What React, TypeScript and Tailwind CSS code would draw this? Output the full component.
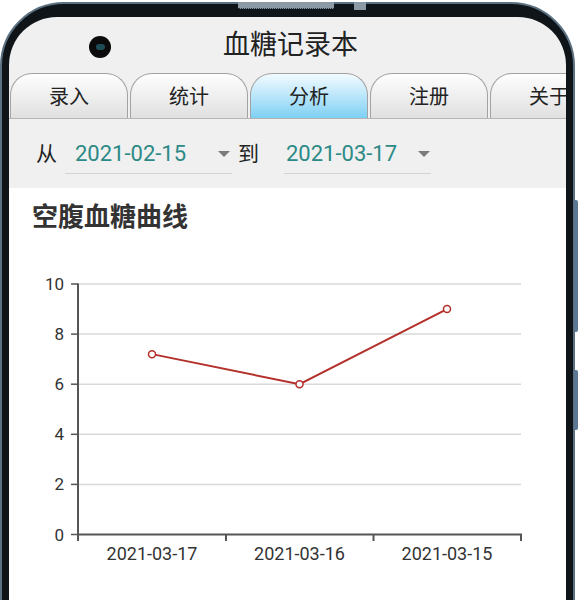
const font = { fontFamily: 'Roboto, "Noto Sans CJK SC", "Noto Sans", sans-serif' };

const tabs = ['录入', '统计', '分析', '注册', '关于'];

function Tab({ label, active }: { label: string; active: boolean }) {
  return (
    <div
      className={`w-[118px] h-[45px] mr-[2px] shrink-0 rounded-t-[22px] border border-b-0 border-[#a2a2a2] flex justify-center pt-[9px] text-[20px] leading-[28px] text-[#222] ${
        active ? 'bg-gradient-to-b from-[#f2fbff] to-[#7dd0f4]' : 'bg-gradient-to-b from-[#fefefe] to-[#e0e0e0]'
      }`}
    >
      {label}
    </div>
  );
}

function Caret() {
  return <div className="w-0 h-0 border-l-[6px] border-r-[6px] border-t-[6px] border-l-transparent border-r-transparent border-t-[#7b7b7b] mt-[12px]" />;
}

function Chart() {
  const grid = [10, 8, 6, 4, 2, 0];
  const y = (v: number) => 534.5 - v * 25.05;
  const pts = [
    { x: 152, v: 7.2 },
    { x: 299.5, v: 6 },
    { x: 447, v: 9 },
  ];
  return (
    <svg width="559" height="340" viewBox="9 250 559 340" className="block">
      {grid.slice(0, 5).map((g) => (
        <line key={g} x1="78" x2="521" y1={y(g)} y2={y(g)} stroke="#d9d9d9" strokeWidth="1.5" />
      ))}
      {grid.map((g) => (
        <g key={'t' + g}>
          <line x1="71" x2="78" y1={y(g)} y2={y(g)} stroke="#555" strokeWidth="1.5" />
          <text x="64" y={y(g)} textAnchor="end" dominantBaseline="central" fontSize="17" fill="#333" style={font}>
            {g}
          </text>
        </g>
      ))}
      <line x1="78" x2="78" y1="283.5" y2="541" stroke="#555" strokeWidth="2" />
      <line x1="77" x2="522" y1="534.5" y2="534.5" stroke="#555" strokeWidth="2" />
      {[226, 373.5, 521].map((x) => (
        <line key={x} x1={x} x2={x} y1="534" y2="541" stroke="#555" strokeWidth="2" />
      ))}
      {['2021-03-17', '2021-03-16', '2021-03-15'].map((d, i) => (
        <text key={d} x={pts[i].x} y="553" textAnchor="middle" dominantBaseline="central" fontSize="18" fill="#333" style={font}>
          {d}
        </text>
      ))}
      <polyline
        points={pts.map((p) => `${p.x},${y(p.v)}`).join(' ')}
        fill="none"
        stroke="#b3302b"
        strokeWidth="2"
      />
      {pts.map((p) => (
        <circle key={p.x} cx={p.x} cy={y(p.v)} r="3.5" fill="#fff" stroke="#b3302b" strokeWidth="1.5" />
      ))}
    </svg>
  );
}

export default function App() {
  return (
    <div className="w-[578px] h-[600px] bg-white overflow-hidden relative" style={font}>
      {/* phone frame */}
      <div className="mr-[3px] mt-[2px] h-[660px] rounded-t-[64px] bg-[#0e1418] border-2 border-[#5b7182] px-[7px] pt-[13px] relative">
        <div className="absolute left-[236px] top-[-2px] w-[96px] h-[7px] bg-[#8b9aa5] border-b border-dotted border-[#2a3640]" />
        <div className="absolute left-[352px] top-[-2px] w-[12px] h-[8px] bg-[#8b9aa5]" />

        <div className="h-full rounded-t-[48px] overflow-hidden bg-[#f0f0f0] flex flex-col">
          {/* title */}
          <div className="h-[56px] shrink-0 relative flex items-center justify-center text-[27px] text-[#222]">
            <div className="absolute left-[80px] top-[19px] w-[22px] h-[22px] rounded-full bg-[#0b0b0b] flex items-center justify-center">
              <div className="w-[9px] h-[6px] rounded-full bg-[#1f4d55]" />
            </div>
            <span className="pl-[6px]">血糖记录本</span>
          </div>

          {/* tabs */}
          <div className="h-[46px] shrink-0 flex items-end pl-[1px] border-b border-[#b5b5b5] overflow-hidden">
            {tabs.map((t, i) => (
              <Tab key={t} label={t} active={i === 2} />
            ))}
          </div>

          {/* date range */}
          <div className="h-[69px] shrink-0 flex items-start pt-[20px] pl-[27px] text-[21px] leading-[30px] text-[#222]">
            <span>从</span>
            <div className="ml-[8px] w-[167px] h-[35px] border-b-[1.5px] border-[#d4d4d4] flex items-start justify-between pl-[10px] pr-[2px]">
              <span className="text-[22px] text-[#2c8a86]">2021-02-15</span>
              <Caret />
            </div>
            <span className="ml-[6px]">到</span>
            <div className="ml-[25px] w-[147px] h-[35px] border-b-[1.5px] border-[#d4d4d4] flex items-start justify-between pl-[2px] pr-[1px]">
              <span className="text-[22px] text-[#2c8a86]">2021-03-17</span>
              <Caret />
            </div>
          </div>

          {/* chart card */}
          <div className="flex-1 bg-white">
            <div className="pt-[14px] pl-[23px] h-[44px] text-[26px] leading-[30px] font-bold text-[#333]">空腹血糖曲线</div>
            <div className="mt-[18px]">
              <Chart />
            </div>
          </div>
        </div>

        {/* side buttons */}
        <div className="absolute right-[-5px] top-[196px] w-[4px] h-[132px] rounded-r-[2px] bg-[#5b7792]" />
        <div className="absolute right-[-5px] top-[366px] w-[4px] h-[60px] rounded-r-[2px] bg-[#5b7792]" />
      </div>
    </div>
  );
}
